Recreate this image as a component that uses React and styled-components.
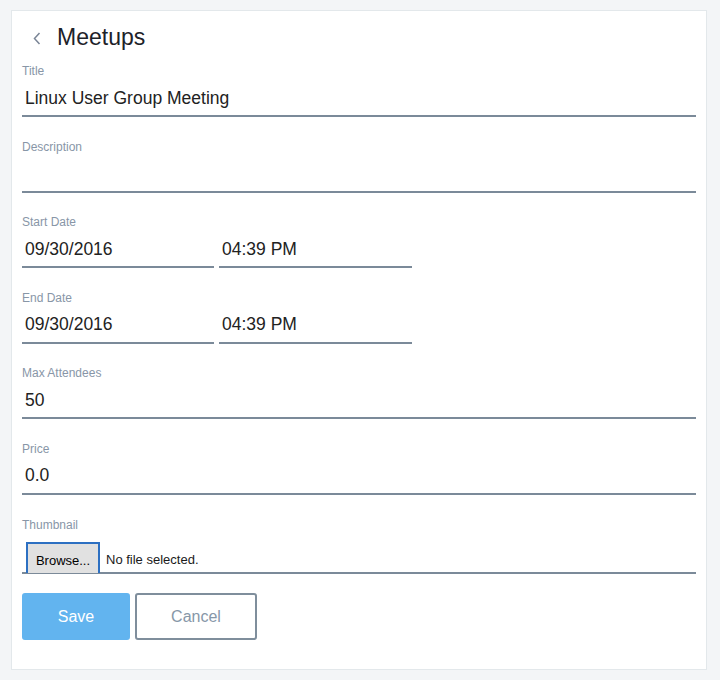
import styled, { createGlobalStyle } from "styled-components";

const Global = createGlobalStyle`
    body {
        margin: 0;
        background: #f3f5f7;
        font-family: "Liberation Sans", Arial, sans-serif;
    }
`;

const App = () => {
    return (
        <>
            <Global />
            <Card>
                <Header>
                    <BackButton aria-label="Back">
                        <svg width="8" height="13" viewBox="0 0 8 13" fill="none">
                            <path d="M6.5 1 L1.5 6.5 L6.5 12" stroke="#7a8596" strokeWidth="1.5" />
                        </svg>
                    </BackButton>
                    <h1>Meetups</h1>
                </Header>

                <Field>
                    <Label>Title</Label>
                    <Input defaultValue="Linux User Group Meeting" />
                </Field>
                <Field>
                    <Label>Description</Label>
                    <Input defaultValue="" />
                </Field>
                <Field>
                    <Label>Start Date</Label>
                    <Row>
                        <Input $w="192px" defaultValue="09/30/2016" />
                        <Input $w="193px" defaultValue="04:39 PM" />
                    </Row>
                </Field>
                <Field>
                    <Label>End Date</Label>
                    <Row>
                        <Input $w="192px" defaultValue="09/30/2016" />
                        <Input $w="193px" defaultValue="04:39 PM" />
                    </Row>
                </Field>
                <Field>
                    <Label>Max Attendees</Label>
                    <Input defaultValue="50" />
                </Field>
                <Field>
                    <Label>Price</Label>
                    <Input defaultValue="0.0" />
                </Field>
                <Field>
                    <Label>Thumbnail</Label>
                    <FileRow>
                        <BrowseBtn type="button">Browse...</BrowseBtn>
                        <span>No file selected.</span>
                    </FileRow>
                </Field>

                <Actions>
                    <Button $primary>Save</Button>
                    <Button>Cancel</Button>
                </Actions>
            </Card>
        </>
    );
}

const Card = styled.div`
    box-sizing: border-box;
    width: 696px;
    margin: 10px 0 0 11px;
    padding: 0 10px 29px 10px;
    background: #fff;
    border: 1px solid #e3e8eb;
`

const Header = styled.div`
    display: flex;
    align-items: center;
    height: 53px;
    padding-left: 11px;

    h1 {
        margin: 0 0 0 16px;
        font-size: 23px;
        font-weight: 400;
        color: #1d2229;
        line-height: 53px;
    }
`

const BackButton = styled.span`
    display: flex;
    align-items: center;
    padding-top: 1px;
`

const Field = styled.div`
    display: flex;
    flex-direction: column;
    margin-bottom: 22.6px;
`

const Label = styled.label`
    font-size: 12px;
    line-height: 14px;
    color: #8896a7;
    margin-bottom: 2px;
`

const Row = styled.div`
    display: flex;
    gap: 5px;
`

const Input = styled.input.attrs({ readOnly: true })`
    box-sizing: border-box;
    width: ${p => p.$w || "100%"};
    height: 37px;
    padding: 7px 3px 6px;
    border: 0;
    border-bottom: 2px solid #7b8a99;
    outline: none;
    font-family: "Liberation Sans", Arial, sans-serif;
    font-size: 17.5px;
    line-height: 22px;
    color: #222;
    background: transparent;
`

const FileRow = styled.div`
    display: flex;
    align-items: flex-end;
    gap: 6px;
    height: 38px;
    padding-left: 4px;
    border-bottom: 2px solid #7b8a99;
    font-size: 13px;
    color: #1a1a1a;

    span {
        line-height: 20px;
        padding-bottom: 2px;
    }
`

const BrowseBtn = styled.button`
    box-sizing: border-box;
    height: 31px;
    width: 74px;
    margin-bottom: -1px;
    padding: 4px 0 0;
    border: 2px solid #2d70c2;
    border-bottom: 0;
    background: #e1e1e1;
    font-family: "Liberation Sans", Arial, sans-serif;
    font-size: 13px;
    color: #000;
`

const Actions = styled.div`
    display: flex;
    gap: 5px;
    margin-top: -3px;
`

const Button = styled.button`
    box-sizing: border-box;
    height: 47px;
    width: ${p => (p.$primary ? "108px" : "122px")};
    border-radius: 3px;
    border: 2px solid ${p => (p.$primary ? "#62b4ef" : "#7f8e9c")};
    background: ${p => (p.$primary ? "#62b4ef" : "#fff")};
    color: ${p => (p.$primary ? "#fff" : "#8797a8")};
    font-family: "Liberation Sans", Arial, sans-serif;
    font-size: 16px;
`

export default App;
